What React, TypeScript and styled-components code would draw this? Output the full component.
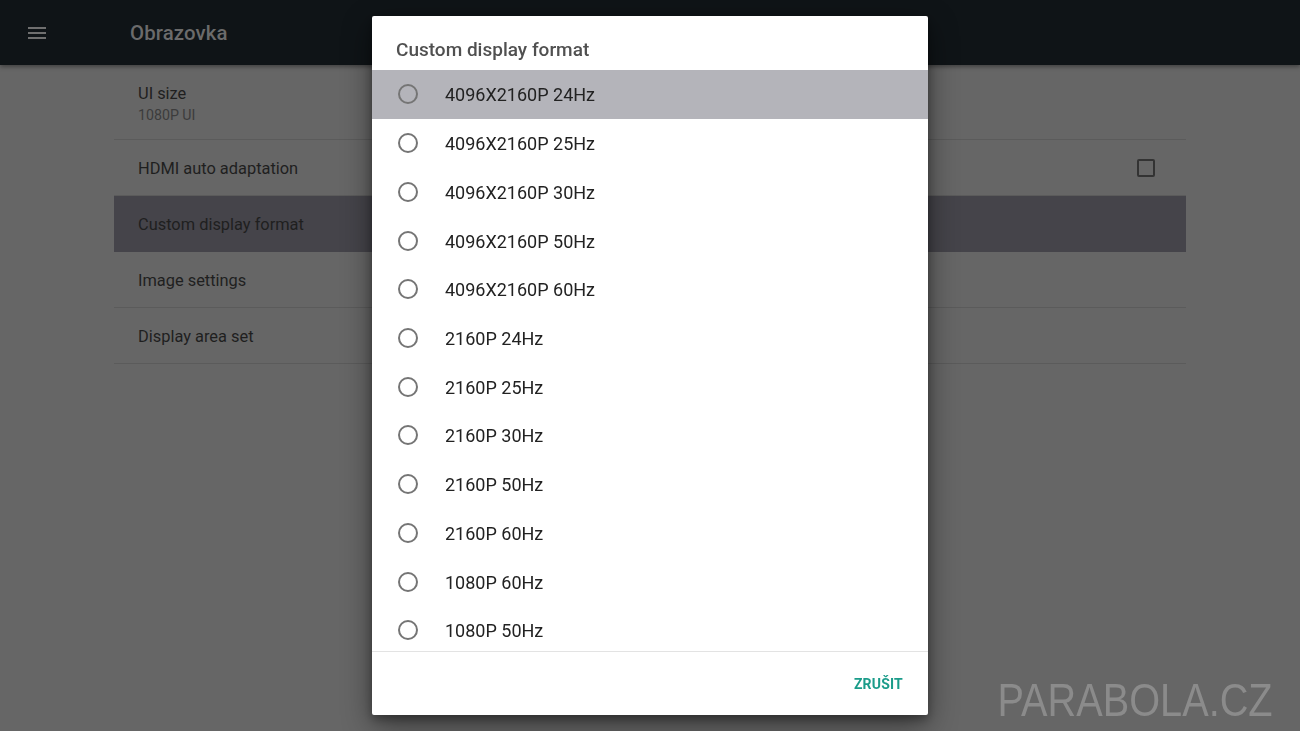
import React from "react";
import styled, { createGlobalStyle } from "styled-components";

const GlobalStyle = createGlobalStyle`
  html, body { margin: 0; padding: 0; }
  body {
    background: #666666;
    font-family: Roboto, "Noto Sans", "Liberation Sans", sans-serif;
    overflow: hidden;
  }
  * { box-sizing: border-box; }
`;

const Page = styled.div`
  width: 1300px;
  height: 731px;
  background: #666666;
  position: relative;
  overflow: hidden;
`;

const TopBar = styled.header`
  height: 65px;
  background: #0f1417;
  display: flex;
  align-items: center;
  box-shadow: 0 2px 4px rgba(0, 0, 0, 0.35);
  position: relative;
  z-index: 1;
`;

const MenuButton = styled.div`
  width: 46px;
  margin-left: 28px;
  display: flex;
  flex-direction: column;
  gap: 3px;
  padding-top: 1px;
`;

const MenuLine = styled.span`
  display: block;
  width: 18px;
  height: 2px;
  background: #6f6f6f;
`;

const TopTitle = styled.h1`
  margin: 0 0 0 56px;
  font-size: 20.4px;
  font-weight: 500;
  color: #6b6b6b;
  letter-spacing: 0.1px;
`;

const SettingsList = styled.div`
  margin: 0 114px;
  display: flex;
  flex-direction: column;
`;

const SettingRow = styled.div<{ $selected?: boolean; $tall?: boolean }>`
  height: ${(p) => (p.$tall ? "75px" : "56px")};
  padding: 2px 24px 0;
  display: flex;
  align-items: center;
  justify-content: space-between;
  border-bottom: 1px solid ${(p) => (p.$selected ? "transparent" : "#5b5b5b")};
  background: ${(p) => (p.$selected ? "#45444a" : "transparent")};
  color: #222222;
`;

const RowText = styled.div`
  display: flex;
  flex-direction: column;
  padding-top: 1px;
`;

const RowTitle = styled.span`
  font-size: 16.4px;
  line-height: 20px;
  color: #1f1f1f;
`;

const RowSubtitle = styled.span`
  font-size: 14.2px;
  line-height: 18px;
  margin-top: 2px;
  color: #3c3c3c;
`;

const CheckBox = styled.span`
  width: 18px;
  height: 18px;
  border: 2px solid #333333;
  border-radius: 2px;
  margin-right: 7px;
  margin-top: -2px;
`;

const Backdrop = styled.div`
  position: fixed;
  inset: 0;
  display: flex;
  align-items: center;
  justify-content: center;
  z-index: 5;
`;

const Dialog = styled.div`
  width: 556px;
  height: 699px;
  background: #ffffff;
  border-radius: 2px;
  display: flex;
  flex-direction: column;
  box-shadow: 0 10px 30px rgba(0, 0, 0, 0.45), 0 4px 10px rgba(0, 0, 0, 0.3);
`;

const DialogTitle = styled.h2`
  margin: 0;
  height: 54px;
  padding: 22px 24px 0;
  font-size: 19px;
  line-height: 24px;
  font-weight: 500;
  color: #505050;
`;

const OptionList = styled.div`
  height: 581px;
  overflow: hidden;
  display: flex;
  flex-direction: column;
`;

const Option = styled.div<{ $active?: boolean }>`
  flex: 0 0 48.73px;
  display: flex;
  align-items: center;
  padding: 1px 0 0 26px;
  background: ${(p) => (p.$active ? "#b4b4ba" : "transparent")};
`;

const Radio = styled.span`
  width: 20px;
  height: 20px;
  border-radius: 50%;
  border: 2px solid #757575;
  flex: 0 0 auto;
  margin-top: -1px;
`;

const OptionLabel = styled.span`
  margin-left: 27px;
  font-size: 18px;
  color: #222222;
`;

const Divider = styled.div`
  height: 1px;
  background: #e3e3e3;
`;

const Footer = styled.div`
  flex: 1;
  display: flex;
  align-items: center;
  justify-content: flex-end;
  padding-right: 25px;
`;

const TextButton = styled.button`
  border: none;
  background: none;
  padding: 0;
  font-family: inherit;
  font-size: 14px;
  font-weight: 700;
  color: #1b9c8a;
  letter-spacing: 0.2px;
`;

const Watermark = styled.div`
  position: absolute;
  right: 27px;
  bottom: 6px;
  font-family: "Liberation Sans", Arial, sans-serif;
  font-size: 47px;
  line-height: 50px;
  color: #8b8b8b;
  transform: scaleX(0.845);
  transform-origin: right center;
  z-index: 10;
`;

const options = [
  "4096X2160P 24Hz",
  "4096X2160P 25Hz",
  "4096X2160P 30Hz",
  "4096X2160P 50Hz",
  "4096X2160P 60Hz",
  "2160P 24Hz",
  "2160P 25Hz",
  "2160P 30Hz",
  "2160P 50Hz",
  "2160P 60Hz",
  "1080P 60Hz",
  "1080P 50Hz",
];

export default function App() {
  return (
    <Page>
      <GlobalStyle />
      <TopBar>
        <MenuButton>
          <MenuLine />
          <MenuLine />
          <MenuLine />
        </MenuButton>
        <TopTitle>Obrazovka</TopTitle>
      </TopBar>
      <SettingsList>
        <SettingRow $tall>
          <RowText>
            <RowTitle>UI size</RowTitle>
            <RowSubtitle>1080P UI</RowSubtitle>
          </RowText>
        </SettingRow>
        <SettingRow>
          <RowTitle>HDMI auto adaptation</RowTitle>
          <CheckBox />
        </SettingRow>
        <SettingRow $selected>
          <RowTitle>Custom display format</RowTitle>
        </SettingRow>
        <SettingRow>
          <RowTitle>Image settings</RowTitle>
        </SettingRow>
        <SettingRow>
          <RowTitle>Display area set</RowTitle>
        </SettingRow>
      </SettingsList>
      <Backdrop>
        <Dialog>
          <DialogTitle>Custom display format</DialogTitle>
          <OptionList>
            {options.map((o, i) => (
              <Option key={o} $active={i === 0}>
                <Radio />
                <OptionLabel>{o}</OptionLabel>
              </Option>
            ))}
          </OptionList>
          <Divider />
          <Footer>
            <TextButton>ZRUŠIT</TextButton>
          </Footer>
        </Dialog>
      </Backdrop>
      <Watermark>PARABOLA.CZ</Watermark>
    </Page>
  );
}
